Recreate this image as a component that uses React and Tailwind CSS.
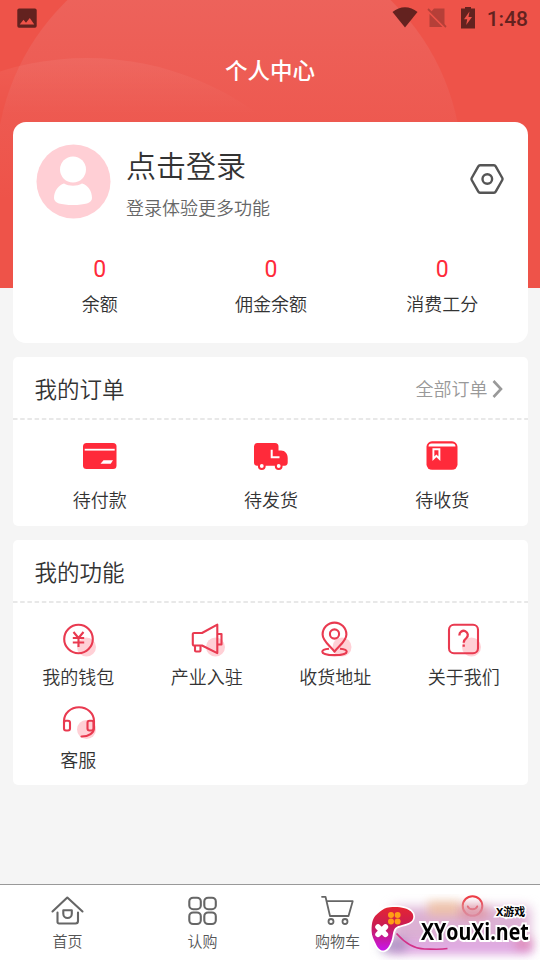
import React from 'react';

const WalletIcon = () => (
  <svg width="40" height="40" viewBox="0 0 40 40" fill="none" stroke="#e93a50" strokeWidth="2.1">
    <circle cx="28.5" cy="28" r="9.5" fill="#ffd0d6" stroke="none" />
    <circle cx="20.5" cy="20" r="14.3" />
    <path d="M15.5 13l5 6 5-6M20.500 19v9M14.800 19h11.400M14.800 23.500h11.400" />
  </svg>
);

const HornIcon = () => (
  <svg width="40" height="40" viewBox="0 0 40 40" fill="none" stroke="#e93a50" strokeWidth="2.1" strokeLinejoin="round">
    <circle cx="28.5" cy="28" r="9.5" fill="#ffd0d6" stroke="none" />
    <path d="M7 14h8L30.300 5.700v28.400L15 26.500H7a1.200 1.200 0 0 1-1.200-1.200V15.200A1.200 1.200 0 0 1 7 14z" />
    <path d="M30.500 15h4v10.500h-4M8 26.500v5a1 1 0 0 0 1 1h3.500a1 1 0 0 0 1-1v-5" />
  </svg>
);

const PlaceIcon = () => (
  <svg width="40" height="40" viewBox="0 0 40 40" fill="none" stroke="#e93a50" strokeWidth="2.1" strokeLinejoin="round">
    <circle cx="27" cy="28" r="9.5" fill="#ffd0d6" stroke="none" />
    <path d="M14 29.800c-4 .400-6.700 1.500-6.700 2.900 0 2 5.300 3.400 12.200 3.400s12.200-1.400 12.200-3.400c0-1.400-2.700-2.500-6.700-2.900" />
    <path d="M19.500 32.700C16 27.500 7.600 22.500 7.600 15.500a11.900 11.900 0 0 1 23.800 0c0 7-8.400 12-11.900 17.200z" />
    <circle cx="19.500" cy="15" r="4.600" />
  </svg>
);

const AboutIcon = () => (
  <svg width="40" height="40" viewBox="0 0 40 40" fill="none" stroke="#e93a50" strokeWidth="2.1">
    <circle cx="27.500" cy="28" r="9.500" fill="#ffd0d6" stroke="none" />
    <rect x="5" y="5.700" width="29" height="28.600" rx="5" />
    <path strokeWidth="2.300" d="M15.400 16.500v-.500a4.200 4.200 0 1 1 6.900 3.200c-1.700 1.300-2.600 2-2.600 4.500M19.700 25.500v2.300" />
  </svg>
);

const ServiceIcon = () => (
  <svg width="40" height="40" viewBox="0 0 40 40" fill="none" stroke="#e93a50" strokeWidth="2.1" strokeLinecap="round">
    <circle cx="28.500" cy="27.500" r="9.500" fill="#ffd0d6" stroke="none" />
    <path d="M6 21v-2a15 13.800 0 0 1 30 0v7c0 5-5 8.500-12.500 8.500" />
    <rect x="6" y="18.800" width="6" height="9.700" rx="2" />
    <rect x="29.500" y="18.800" width="6" height="9.700" rx="2" />
  </svg>
);

const PayIcon = () => (
  <svg width="40" height="40" viewBox="0 0 40 40">
    <rect x="3" y="7" width="33.500" height="26" rx="3.500" fill="#ff2a3a" />
    <path d="M4.700 13.700h30" stroke="#fff" strokeWidth="1.800" />
    <path d="M23.500 24.200H33l-2.300 3.600h-10.200z" fill="#fff" />
  </svg>
);

const TruckIcon = () => (
  <svg width="40" height="40" viewBox="0 0 40 40">
    <path d="M6.500 7h17.500a3.500 3.500 0 0 1 3.500 3.500v4h2.500c4 0 6.700 3.300 6.700 7.500v4.500c0 2-1 3.200-3 3.200H6c-2 0-3-1.200-3-3.200V10.500A3.500 3.500 0 0 1 6.500 7z" fill="#ff2a3a" />
    <path d="M20.700 13.700v7.500h7.800" stroke="#fff" strokeWidth="2" fill="none" />
    <circle cx="10.800" cy="30" r="2.900" fill="#fff" stroke="#ff2a3a" strokeWidth="2" />
    <circle cx="27.700" cy="30" r="2.900" fill="#fff" stroke="#ff2a3a" strokeWidth="2" />
  </svg>
);

const ReceiveIcon = () => (
  <svg width="40" height="40" viewBox="0 0 40 40">
    <rect x="4.500" y="5.300" width="31" height="28.500" rx="5.500" fill="#ff2a3a" />
    <path d="M6.500 10.500c0-2 1.200-3 3-3h21c1.800 0 3 1 3 3z" fill="#fff" />
    <path d="M11.400 13.200h6v9.500l-3-2.800-3 2.800z" fill="none" stroke="#fff" strokeWidth="1.900" />
  </svg>
);

const stats = [
  { label: '余额', value: 0 },
  { label: '佣金余额', value: 0 },
  { label: '消费工分', value: 0 },
];

const orders = [
  { label: '待付款', icon: <PayIcon /> },
  { label: '待发货', icon: <TruckIcon /> },
  { label: '待收货', icon: <ReceiveIcon /> },
];

const features = [
  { label: '我的钱包', icon: <WalletIcon /> },
  { label: '产业入驻', icon: <HornIcon /> },
  { label: '收货地址', icon: <PlaceIcon /> },
  { label: '关于我们', icon: <AboutIcon /> },
  { label: '客服', icon: <ServiceIcon /> },
];

const tabs = [
  {
    label: '首页',
    icon: (
      <svg width="36" height="34" viewBox="0 0 36 34" fill="none" stroke="#666" strokeWidth="2.100" strokeLinecap="round" strokeLinejoin="round">
        <path d="M2.500 17.500L17.300 3.500 32.500 17.500M7.500 18.500v9.500a1.500 1.500 0 0 0 1.500 1.500H25.500a2.500 2.500 0 0 0 2.500-2.500V18.500" />
        <path d="M13.300 16.200h8.500v3.500a4.200 4.200 0 0 1-8.500 0z" />
      </svg>
    ),
  },
  {
    label: '认购',
    icon: (
      <svg width="36" height="34" viewBox="0 0 36 34" fill="none" stroke="#666" strokeWidth="2.100">
        <rect x="4.300" y="3.700" width="11.500" height="11.500" rx="3.800" />
        <rect x="19.300" y="3.700" width="11.500" height="11.500" rx="3.800" />
        <rect x="4.300" y="18.500" width="11.500" height="11.500" rx="3.800" />
        <rect x="19.300" y="18.500" width="11.500" height="11.500" rx="3.800" />
      </svg>
    ),
  },
  {
    label: '购物车',
    icon: (
      <svg width="36" height="34" viewBox="0 0 36 34" fill="none" stroke="#666" strokeWidth="1.800" strokeLinecap="round" strokeLinejoin="round">
        <path d="M2 2.800h3.500l4.500 19.200h18.500L32.700 7.200H7" />
        <circle cx="11" cy="27.500" r="2.500" />
        <circle cx="25" cy="27.500" r="2.500" />
      </svg>
    ),
  },
  {
    label: '',
    icon: (
      <svg width="36" height="34" viewBox="0 0 36 34" fill="none" stroke="#ee3b43" strokeWidth="2" strokeLinecap="round">
        <circle cx="17.500" cy="12" r="9.800" />
        <path d="M12.800 12.500c1.500 3.800 7.900 3.800 9.400 0" />
      </svg>
    ),
  },
];

const StatusBar = () => (
  <div className="relative flex h-9 items-center justify-between pl-[17px] pr-[12px] text-[#63221f]">
    <svg width="20" height="20" viewBox="0 0 20 20">
      <path fillRule="evenodd" fill="currentColor" d="M2 .5h16A1.800 1.800 0 0 1 19.700 2v16a1.800 1.800 0 0 1-1.700 1.700H2A1.800 1.800 0 0 1 .3 18V2A1.800 1.800 0 0 1 2 .5zM2.700 16.500h14.600L12.800 10l-3.800 4.800-2.500-3z" />
    </svg>
    <div className="flex items-center">
      <svg width="26" height="22" viewBox="0 0 26 22" fill="currentColor">
        <path d="M.5 4.900C8-1.400 18-1.400 25.500 4.900L13 20.400z" />
      </svg>
      <svg className="ml-[9px] opacity-40" width="20" height="22" viewBox="0 0 20 22">
        <path fill="currentColor" d="M7 1.500h10.500v17L4 5zM2.500 7l13 13h-13z" />
        <path d="M1 2l18 18" stroke="currentColor" strokeWidth="1.800" />
      </svg>
      <svg className="ml-[14px]" width="14" height="22" viewBox="0 0 14 22">
        <path fillRule="evenodd" fill="currentColor" d="M4 -.5h6v2h4v20H0v-20h4zM8.500 4.500L3 12.200h3.200L5.200 18 11 10H7.500z" />
      </svg>
      <span className="ml-[12px] pt-[2px] font-[Roboto] text-[21px] leading-6 font-medium">1:48</span>
    </div>
  </div>
);

const Watermark = () => (
  <div className="absolute bottom-0 left-[366px] h-[66px] w-[174px] overflow-hidden">
    <div className="absolute top-[13px] left-[26px] h-[42px] w-[138px] bg-[#d6a3cc]/85 blur-[6px]" />
    <div className="absolute top-[7px] left-[62px] h-[15px] w-[32px] bg-[#efbd93]/70 blur-[5px]" />
    <div className="absolute top-[11px] left-[94px] h-[14px] w-[28px] bg-[#e07f80]/50 blur-[4px]" />
    <div className="absolute top-[46px] left-[20px] h-[14px] w-[146px] bg-[#dda0e2]/80 blur-[5px]" />
    <div className="absolute top-[44px] left-[14px] h-[14px] w-[26px] bg-[#8582aa]/50 blur-[5px]" />
    <div className="absolute top-[45px] left-[150px] h-[10px] w-[15px] bg-[#df6488]/50 blur-[5px]" />
    <svg className="absolute inset-0" width="174" height="66" viewBox="0 0 174 66">
      <defs>
        <linearGradient id="pad" x1="0" y1="0" x2="0" y2="1">
          <stop offset="0" stopColor="#e52531" />
          <stop offset=".45" stopColor="#c81c55" />
          <stop offset="1" stopColor="#c715ed" />
        </linearGradient>
      </defs>
      <path d="M30.500 39.500c8 9 17 15.500 28 15.500 7 0 15 1 23-.500" fill="none" stroke="#d33188" strokeWidth="1.600" />
      <path d="M13.500 18C17 15.500 19 13.600 24 13.300c5-.500 10-.300 14.500 1 5 1.500 8.800 4 8.800 8.200 0 4.500-3 6-7 7.300-4.500 1.500-9.300 2-11.300 4.500-2.500 3.500-2 8-3.600 12.500-1.500 4.200-4 9.200-7.500 9.700-4 .500-6.400-3-8-6.500-2-4.500-4.300-8-4.300-13 0-9 1-14 7.900-19z" fill="url(#pad)" stroke="#fff" strokeWidth="3.500" paintOrder="stroke" />
      <path d="M12 33l7.400 7.400m0-7.400L12 40.400" stroke="#fff" strokeWidth="5.500" strokeLinecap="round" />
      <g fill="#ff9e16">
        <circle cx="25" cy="21" r="3" />
        <circle cx="31.600" cy="21" r="3" />
        <circle cx="25" cy="27.600" r="3" />
        <circle cx="31.600" cy="27.600" r="3" />
      </g>
    </svg>
    <div className="absolute top-[11px] left-[130px] font-['Noto_Sans','Noto_Sans_CJK_SC',sans-serif] text-[11px] leading-[13px] font-bold whitespace-nowrap text-black [paint-order:stroke] [-webkit-text-stroke:3px_white]">X游戏</div>
    <div className="absolute top-[25px] left-[55px] origin-left scale-x-[0.87] font-['Open_Sans',sans-serif] text-[22.5px] leading-[26px] font-bold whitespace-nowrap text-black [paint-order:stroke] [-webkit-text-stroke:4px_white]">XYouXi.net</div>
  </div>
);

const App = () => {
  return (
    <div className="relative flex h-[960px] w-[540px] flex-col overflow-hidden bg-[#f5f5f5] font-['Noto_Sans_CJK_SC',sans-serif] font-[350] text-[#333]">
      <header className="relative h-[288px] shrink-0 bg-[#ee5349]">
        <svg className="absolute inset-0" width="540" height="288" viewBox="0 0 540 288">
          <defs>
            <linearGradient id="arc" x1="0" y1="0" x2="0" y2="200" gradientUnits="userSpaceOnUse">
              <stop offset="0" stopColor="#eb7b78" stopOpacity=".38" />
              <stop offset="1" stopColor="#eb7b78" stopOpacity="0" />
            </linearGradient>
            <linearGradient id="hill" x1="0" y1="58" x2="0" y2="115" gradientUnits="userSpaceOnUse">
              <stop offset="0" stopColor="#fff" stopOpacity=".06" />
              <stop offset="1" stopColor="#fff" stopOpacity="0" />
            </linearGradient>
          </defs>
          <circle cx="229" cy="168" r="233" fill="url(#arc)" />
          <circle cx="87" cy="347" r="289" fill="url(#hill)" />
        </svg>
        <StatusBar />
        <h1 className="relative pt-[16px] text-center text-[22.5px] leading-[34px] font-medium text-white">个人中心</h1>
      </header>

      <main className="relative -mt-[166.5px] flex flex-1 flex-col gap-[14px] pr-[12px] pl-[13px]">
        {/* Profile */}
        <section className="h-[221.5px] rounded-[13px] bg-white">
          <div className="flex items-start pt-[22.5px] pr-[23.5px] pl-[23px]">
            <svg width="75" height="75" viewBox="0 0 75 75">
              <circle cx="37.500" cy="37.500" r="37" fill="#ffcfd5" />
              <circle cx="37" cy="25.500" r="13" fill="#fff" />
              <path d="M18 54c0-7 4.500-13 10-14.500 5 3 13 3 18 0C52 41 56 47 56 54c0 5-7 7-19 7s-19-2-19-7z" fill="#fff" />
            </svg>
            <div className="ml-[15px] flex-1">
              <div className="text-[30px] leading-[41px]">点击登录</div>
              <div className="mt-[9px] text-[18px] leading-[27px] text-[#666]">登录体验更多功能</div>
            </div>
            <svg className="mt-[18px]" width="36" height="34" viewBox="0 0 36 34" fill="none" stroke="#555" strokeWidth="2.400" strokeLinejoin="round">
              <path d="M11 3.300h14a2 2 0 0 1 1.700 1L33.300 16a2 2 0 0 1 0 2l-6.600 11.700a2 2 0 0 1-1.700 1h-14a2 2 0 0 1-1.700-1L2.700 18a2 2 0 0 1 0-2L9.300 4.300a2 2 0 0 1 1.700-1z" />
              <circle cx="18.300" cy="17" r="4.800" />
            </svg>
          </div>
          <div className="mt-[31px] grid grid-cols-3 pl-px text-center">
            {stats.map((item) => (
              <div key={item.label}>
                <div className="font-[Roboto] text-[23px] leading-9 font-normal text-[#ff2a3a]">{item.value}</div>
                <div className="text-[18px] leading-[31px]">{item.label}</div>
              </div>
            ))}
          </div>
        </section>

        {/* Orders */}
        <section className="h-[169px] rounded-[5px] bg-white">
          <div className="flex h-[61px] items-center justify-between pr-[25.5px] pl-[21.5px]">
            <h2 className="pt-[3px] text-[22.5px]">我的订单</h2>
            <a href="#" className="flex items-center gap-[4px] pt-[2px] text-[18px] text-[#999]">
              全部订单
              <svg width="11" height="18" viewBox="0 0 11 18" fill="none" stroke="#999" strokeWidth="2.600">
                <path d="M1.500 1l7.500 8-7.500 8" />
              </svg>
            </a>
          </div>
          <svg className="block" width="515" height="2"><path d="M0 1h515" stroke="#e8e8e8" strokeWidth="2" strokeDasharray="4.500 2.700" /></svg>
          <div className="grid grid-cols-3 pt-[16px] pl-px">
            {orders.map((item) => (
              <div key={item.label} className="flex flex-col items-center">
                {item.icon}
                <span className="mt-[10px] text-[18px] leading-[27px]">{item.label}</span>
              </div>
            ))}
          </div>
        </section>

        {/* Features */}
        <section className="h-[245px] rounded-[5px] bg-white">
          <h2 className="flex h-[61px] items-center pt-[3px] pl-[21.5px] text-[22.5px]">我的功能</h2>
          <svg className="block" width="515" height="2"><path d="M0 1h515" stroke="#e8e8e8" strokeWidth="2" strokeDasharray="4.500 2.700" /></svg>
          <div className="grid grid-cols-4 gap-y-[12px] pt-[16px] pl-px">
            {features.map((item) => (
              <div key={item.label} className="flex flex-col items-center">
                {item.icon}
                <span className="mt-[4px] text-[18px] leading-[27px]">{item.label}</span>
              </div>
            ))}
          </div>
        </section>
      </main>

      <nav className="grid h-[76px] shrink-0 grid-cols-4 border-t border-[#999] bg-white pt-[9px]">
        {tabs.map((tab, index) => (
          <a href="#" key={index} className="flex flex-col items-center">
            {tab.icon}
            <span className="mt-[2px] text-[15px] leading-[22px] text-[#555]">{tab.label}</span>
          </a>
        ))}
      </nav>
      <Watermark />
    </div>
  );
};

export default App;
